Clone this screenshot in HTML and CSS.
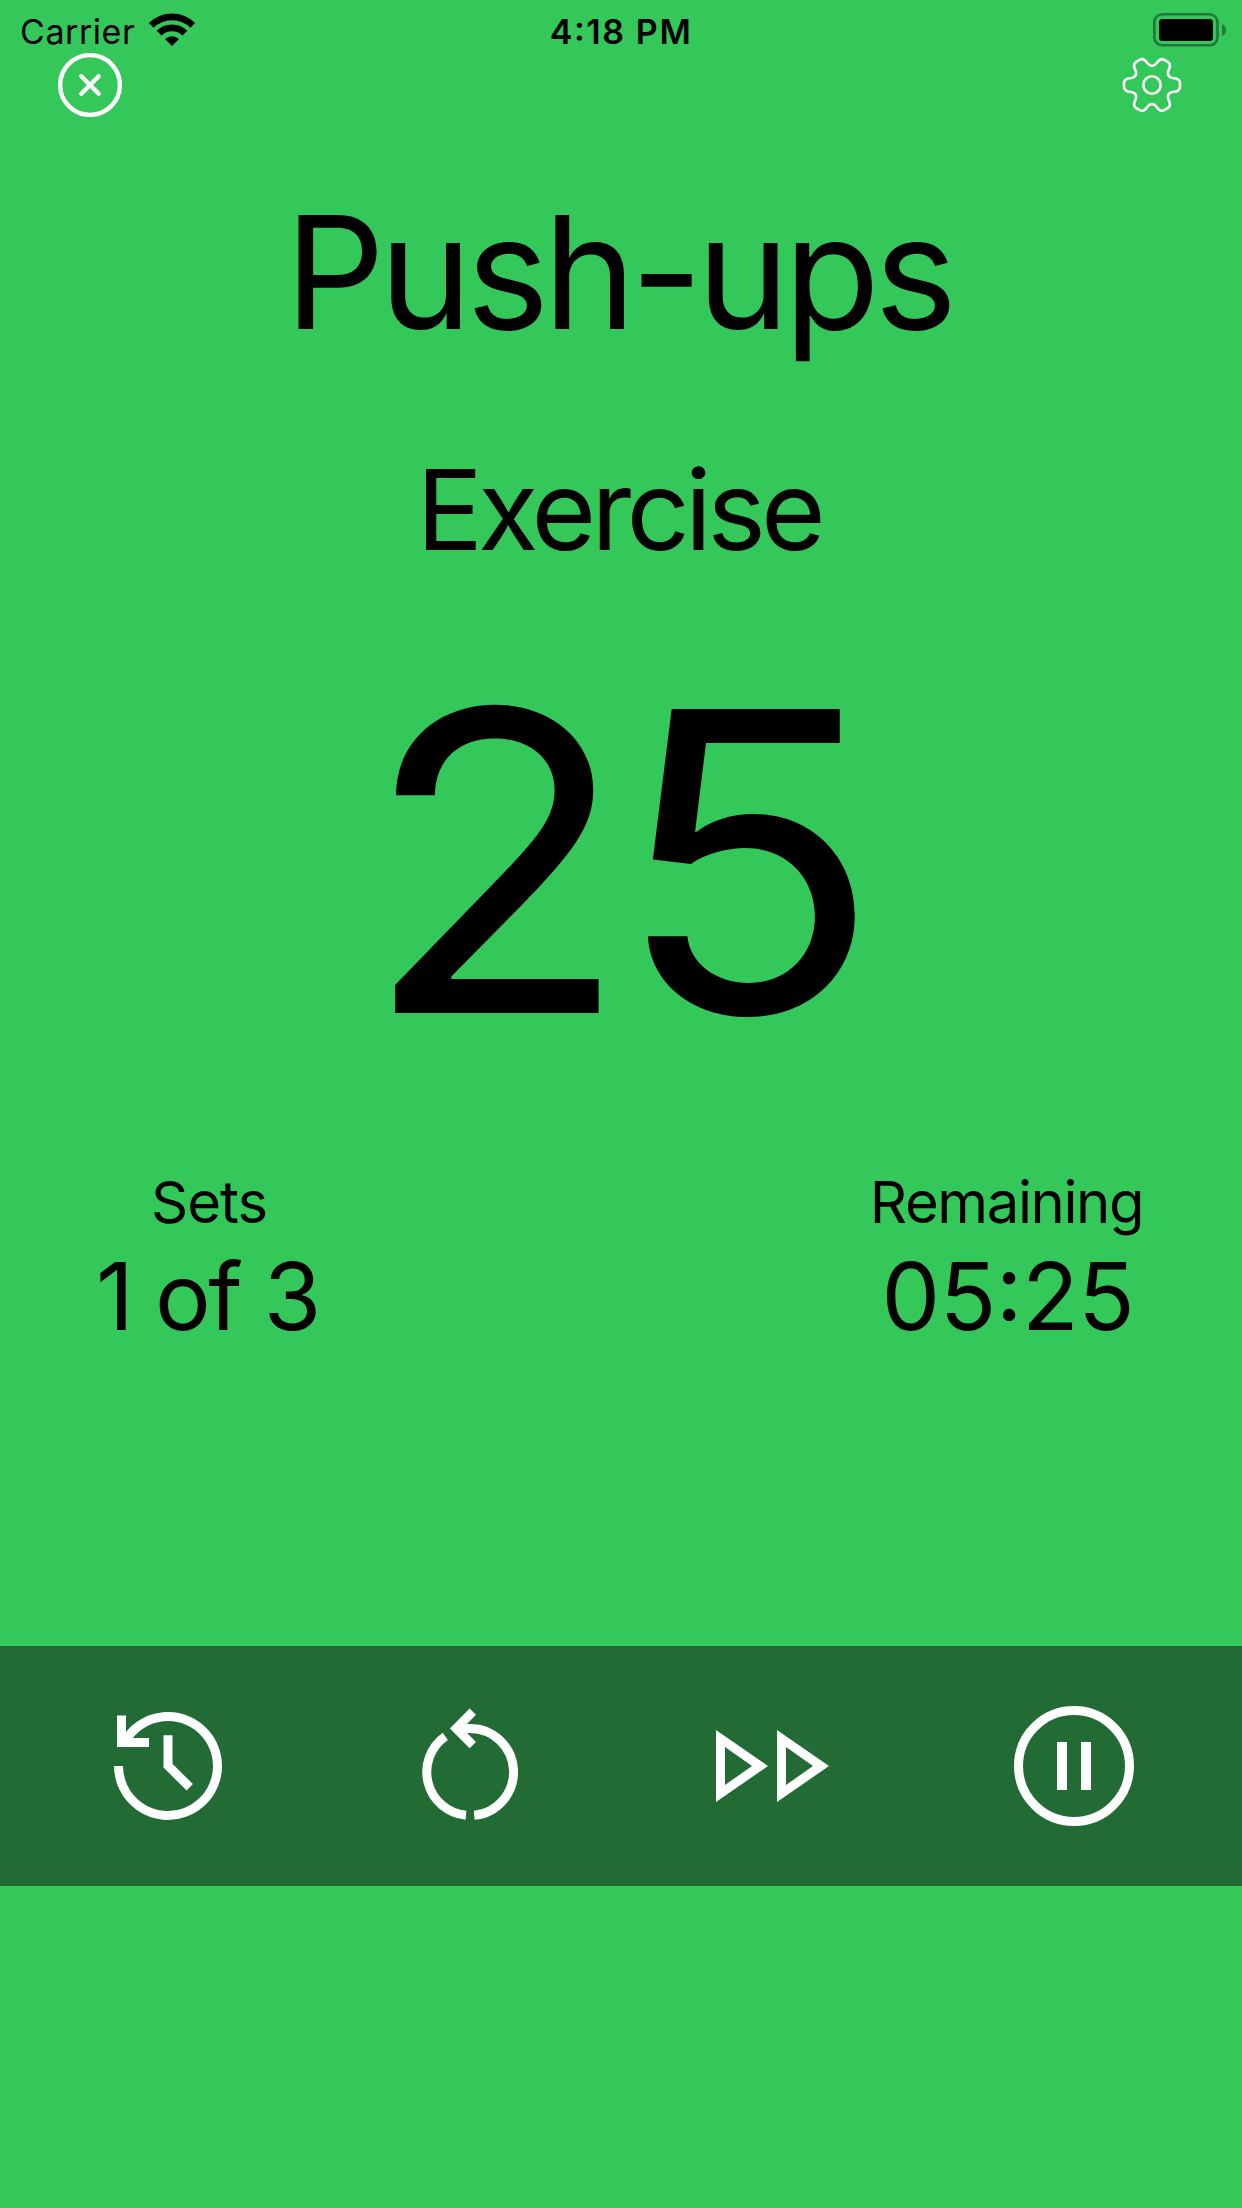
FILE: index.html
```
<!DOCTYPE html>
<html lang="en">
  <head>
    <meta charset="UTF-8" />
    <meta name="viewport" content="width=device-width, initial-scale=1.0" />
    <title>Workout Timer</title>
    <link rel="stylesheet" href="styles.css">
  </head>
  <body>
    <div class="status-bar">
      <div class="carrier">
        <span class="carrier-name">Carrier</span>
        <svg class="wifi" width="48" height="34" viewBox="0 0 48 34">
          <path d="M3.3 12.4A29.3 29.3 0 0 1 44.7 12.4" />
          <path d="M11.1 20.2A18.3 18.3 0 0 1 36.9 20.2" />
          <path class="solid" d="M24 33L17 26A10 10 0 0 1 31 26Z" />
        </svg>
      </div>
      <div class="time">4:18 PM</div>
      <div class="battery-wrap">
        <svg class="battery" width="74" height="34" viewBox="0 0 74 34">
          <rect class="shell" x="1.3" y="1.3" width="63.2" height="31" rx="8" />
          <rect x="6" y="6" width="54" height="22" rx="3.5" />
          <path class="nub" d="M69 11Q73 13 73 17Q73 21 69 23Z" />
        </svg>
      </div>
    </div>

    <div class="top-nav">
      <svg class="close" width="64" height="64" viewBox="0 0 64 64">
        <circle cx="32" cy="32" r="29.9" />
        <path d="M23.3 23.3L40.7 40.7M40.7 23.3L23.3 40.7" />
      </svg>
      <svg class="settings" width="60" height="60" viewBox="0 0 60 60">
        <defs>
          <path id="tooth" d="M46.5 20.5Q47.6 22.6 51 23Q58 23.6 58 28V32Q58 36.4 51 37Q47.6 37.4 46.5 39.5" />
        </defs>
        <circle cx="30" cy="30" r="8.7" />
        <use href="#tooth" />
        <use href="#tooth" transform="rotate(60 30 30)" />
        <use href="#tooth" transform="rotate(120 30 30)" />
        <use href="#tooth" transform="rotate(180 30 30)" />
        <use href="#tooth" transform="rotate(240 30 30)" />
        <use href="#tooth" transform="rotate(300 30 30)" />
      </svg>
    </div>

    <h1 class="exercise-name">Push-ups</h1>
    <h2 class="phase">Exercise</h2>
    <div class="countdown">25</div>

    <div class="stats">
      <div class="stat sets">
        <div class="label">Sets</div>
        <div class="value">1 of 3</div>
      </div>
      <div class="stat remaining">
        <div class="label">Remaining</div>
        <div class="value">05:25</div>
      </div>
    </div>

    <div class="controls">
      <svg width="120" height="120" viewBox="0 0 120 120">
        <path d="M10.5 60A49.5 49.5 0 1 0 16.7 36" />
        <path d="M13.5 9.5V36.5H41" />
        <path d="M60 29.3V59.7L81.8 81.3" />
      </svg>
      <svg width="120" height="120" viewBox="0 0 120 120">
        <path d="M56 109.3A43.5 43.5 0 0 1 35.3 30.4" />
        <path d="M64.2 109.3A43.5 43.5 0 0 0 60 22.5H48" />
        <path d="M62.8 5.7L46.2 22.5L62.8 39.2" />
      </svg>
      <svg width="120" height="120" viewBox="0 0 120 120">
        <path class="solid" d="M4 24L56 60L4 96ZM13 41V79L40 60Z" />
        <path class="solid" d="M65 24L117 60L65 96ZM74 41V79L101 60Z" />
      </svg>
      <svg width="120" height="120" viewBox="0 0 120 120">
        <circle cx="60" cy="60" r="55.5" />
        <path class="solid" d="M43 36H53V84H43ZM67 36H77V84H67Z" />
      </svg>
    </div>
  </body>
</html>
```
FILE: styles.css
```
* {
  box-sizing: border-box;
}

body {
  margin: 0;
  min-height: 2208px;
  background-color: #34c759;
  color: black;
  font-family: Inter, "Liberation Sans", sans-serif;
  text-align: center;
}

svg {
  display: block;
}

.status-bar {
  display: grid;
  grid-template-columns: 1fr auto 1fr;
  height: 52px;
  padding: 11px 20px 0;
  font-size: 34px;
  line-height: 41px;
  white-space: nowrap;
}

.carrier {
  display: flex;
  gap: 13px;
  letter-spacing: 0.55px;
}

.wifi {
  margin-top: 2px;
  fill: none;
  stroke: black;
  stroke-width: 6.8;
}

.wifi .solid {
  fill: black;
  stroke: none;
}

.time {
  font-weight: 580;
  letter-spacing: 1.6px;
  font-feature-settings: "case"; /* raises the colon */
}

.battery-wrap {
  display: flex;
  justify-content: flex-end;
  margin-right: -5px;
  padding-top: 2px;
}

.battery .shell {
  fill: none;
  stroke: #20783a;
  stroke-width: 2.6;
}

.battery .nub {
  fill: #20783a;
}

.top-nav {
  display: flex;
  justify-content: space-between;
  align-items: center;
  height: 66px;
  padding: 0 60px 0 58px;
}

.top-nav svg {
  fill: none;
  stroke: white;
  stroke-linecap: round;
}

.close {
  stroke-width: 4.4;
}

.settings {
  stroke-width: 2.6;
}

.exercise-name {
  margin: 60px 0 0;
  padding-right: 6px;
  font-size: 157px;
  font-weight: 400;
  line-height: 188px;
  letter-spacing: -5.8px;
}

.phase {
  margin: 78px 0 0;
  padding-right: 5px;
  font-size: 111px;
  font-weight: 400;
  line-height: 132px;
  letter-spacing: -4.8px;
}

.countdown {
  margin-top: 35px;
  padding-right: 14px;
  font-size: 418px;
  line-height: 500px;
  letter-spacing: -15px;
  transform: scaleX(1.05);
}

.stats {
  display: flex;
  justify-content: space-between;
  margin-top: 56px;
  padding: 0 94px 0 98px;
  white-space: nowrap;
}

.sets {
  width: 220px;
}

.remaining {
  width: 280px;
}

.label {
  font-size: 58px;
  line-height: 70px;
  letter-spacing: -1px;
}

.value {
  margin-top: 4px;
  font-size: 93px;
  line-height: 110px;
  letter-spacing: -0.5px;
  font-feature-settings: "case";
}

.sets .label {
  padding-left: 2px;
}

/* wider than the padded column, so pull it left with a margin */
.sets .value {
  margin-left: -2px;
  padding-right: 25px;
  letter-spacing: -2.5px;
}

.remaining .label {
  padding-right: 3px;
  letter-spacing: -1.4px;
}

.controls {
  display: flex;
  justify-content: space-between;
  align-items: center;
  height: 240px;
  margin-top: 295px;
  padding: 0 108px;
  background-color: #236b35;
}

.controls svg {
  fill: none;
  stroke: white;
  stroke-width: 9;
}

.controls .solid {
  fill: white;
  fill-rule: evenodd;
  stroke: none;
}
```
